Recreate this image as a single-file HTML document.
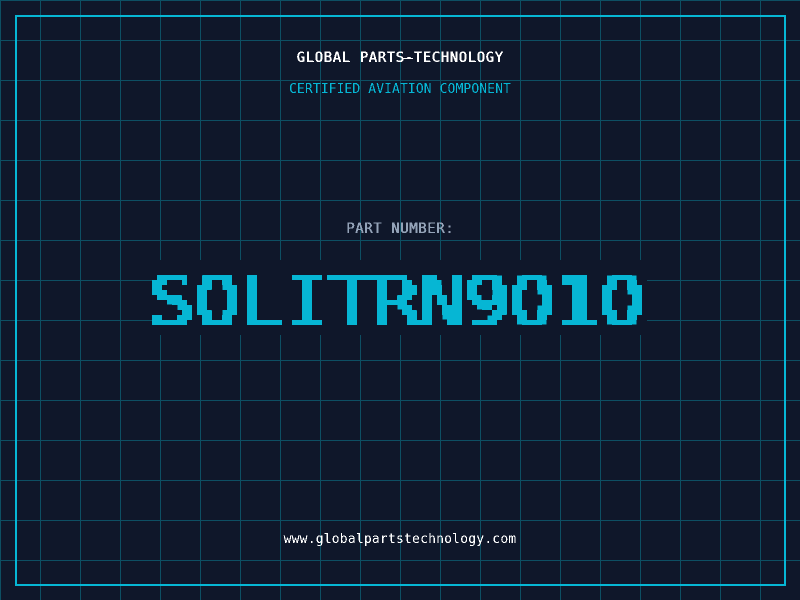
<!DOCTYPE html>
<html><head><meta charset="utf-8"><style>
html,body{margin:0;padding:0;width:800px;height:600px;overflow:hidden;background:#0f172a}
.grid{position:absolute;left:0;top:0;width:800px;height:600px;
background-image:linear-gradient(to right,#0d4f63 1px,transparent 1px),linear-gradient(to bottom,#0d4f63 1px,transparent 1px);background-size:40px 40px}
.frame{position:absolute;left:15px;top:15px;width:767px;height:567px;border:2px solid #06b6d4}
.t{position:absolute;left:0;width:800px;text-align:center;font-family:"DejaVu Sans Mono",monospace;white-space:pre;filter:url(#th)}
.box{position:absolute;left:152px;top:260px;width:495px;height:75px;background:#0f172a}
svg.big{position:absolute;left:0;top:0}
</style></head><body>
<div class="grid"></div><div class="frame"></div>
<svg width="0" height="0" style="position:absolute"><filter id="th" x="0" y="0" width="100%" height="100%" color-interpolation-filters="sRGB"><feComponentTransfer><feFuncA type="discrete" tableValues="0 0 1 1"/></feComponentTransfer></filter></svg>
<div class="t" style="top:50px;font-size:14px;line-height:16px;letter-spacing:.57px;color:#fff;text-shadow:.5px 0 0 #fff">GLOBAL PARTS-TECHNOLOGY</div>
<div style="position:absolute;left:403px;top:58px;width:10px;height:1px;background:#fff"></div>
<div class="t" style="top:82px;font-size:13px;line-height:15px;letter-spacing:.1px;color:#06b6d4">CERTIFIED AVIATION COMPONENT</div>
<div class="t" style="top:221px;font-size:14px;line-height:16px;letter-spacing:.57px;color:#94a3b8;text-shadow:.5px 0 0 #94a3b8">PART NUMBER:</div>
<div class="box"></div>
<svg class="big" width="800" height="600">
<filter id="px" filterUnits="userSpaceOnUse" primitiveUnits="userSpaceOnUse" x="0" y="0" width="800" height="600" color-interpolation-filters="sRGB">
<feMorphology in="SourceGraphic" operator="dilate" radius="2 0" result="w"/>
<feFlood x="4" y="2" width="1" height="1" flood-color="#000" result="d"/>
<feComposite in="d" in2="d" operator="over" x="0" y="0" width="5" height="5" result="cell"/>
<feTile in="cell" x="0" y="0" width="800" height="600" result="tile"/>
<feComposite in="w" in2="tile" operator="in" x="0" y="0" width="800" height="600" result="s"/>
<feComponentTransfer in="s" result="b"><feFuncA type="discrete" tableValues="0 0 1 1"/></feComponentTransfer>
<feMorphology in="b" operator="dilate" radius="2"/>
</filter>
<g filter="url(#px)"><text transform="translate(149.5 325) scale(1 .914)" font-family="'DejaVu Sans Mono',monospace" font-size="75" letter-spacing="-.15" fill="#06b6d4">SOLITRN9010</text></g>
<path d="M527 285h10v10h5v10h-5v10h-10v-10h-5v-10h5zM617 285h10v10h5v10h-5v10h-10v-10h-5v-10h5z" fill="#0f172a"/>
</svg>
<div class="t" style="top:532px;font-size:13px;line-height:15px;letter-spacing:.2px;color:#fff">www.globalpartstechnology.com</div>
</body></html>
